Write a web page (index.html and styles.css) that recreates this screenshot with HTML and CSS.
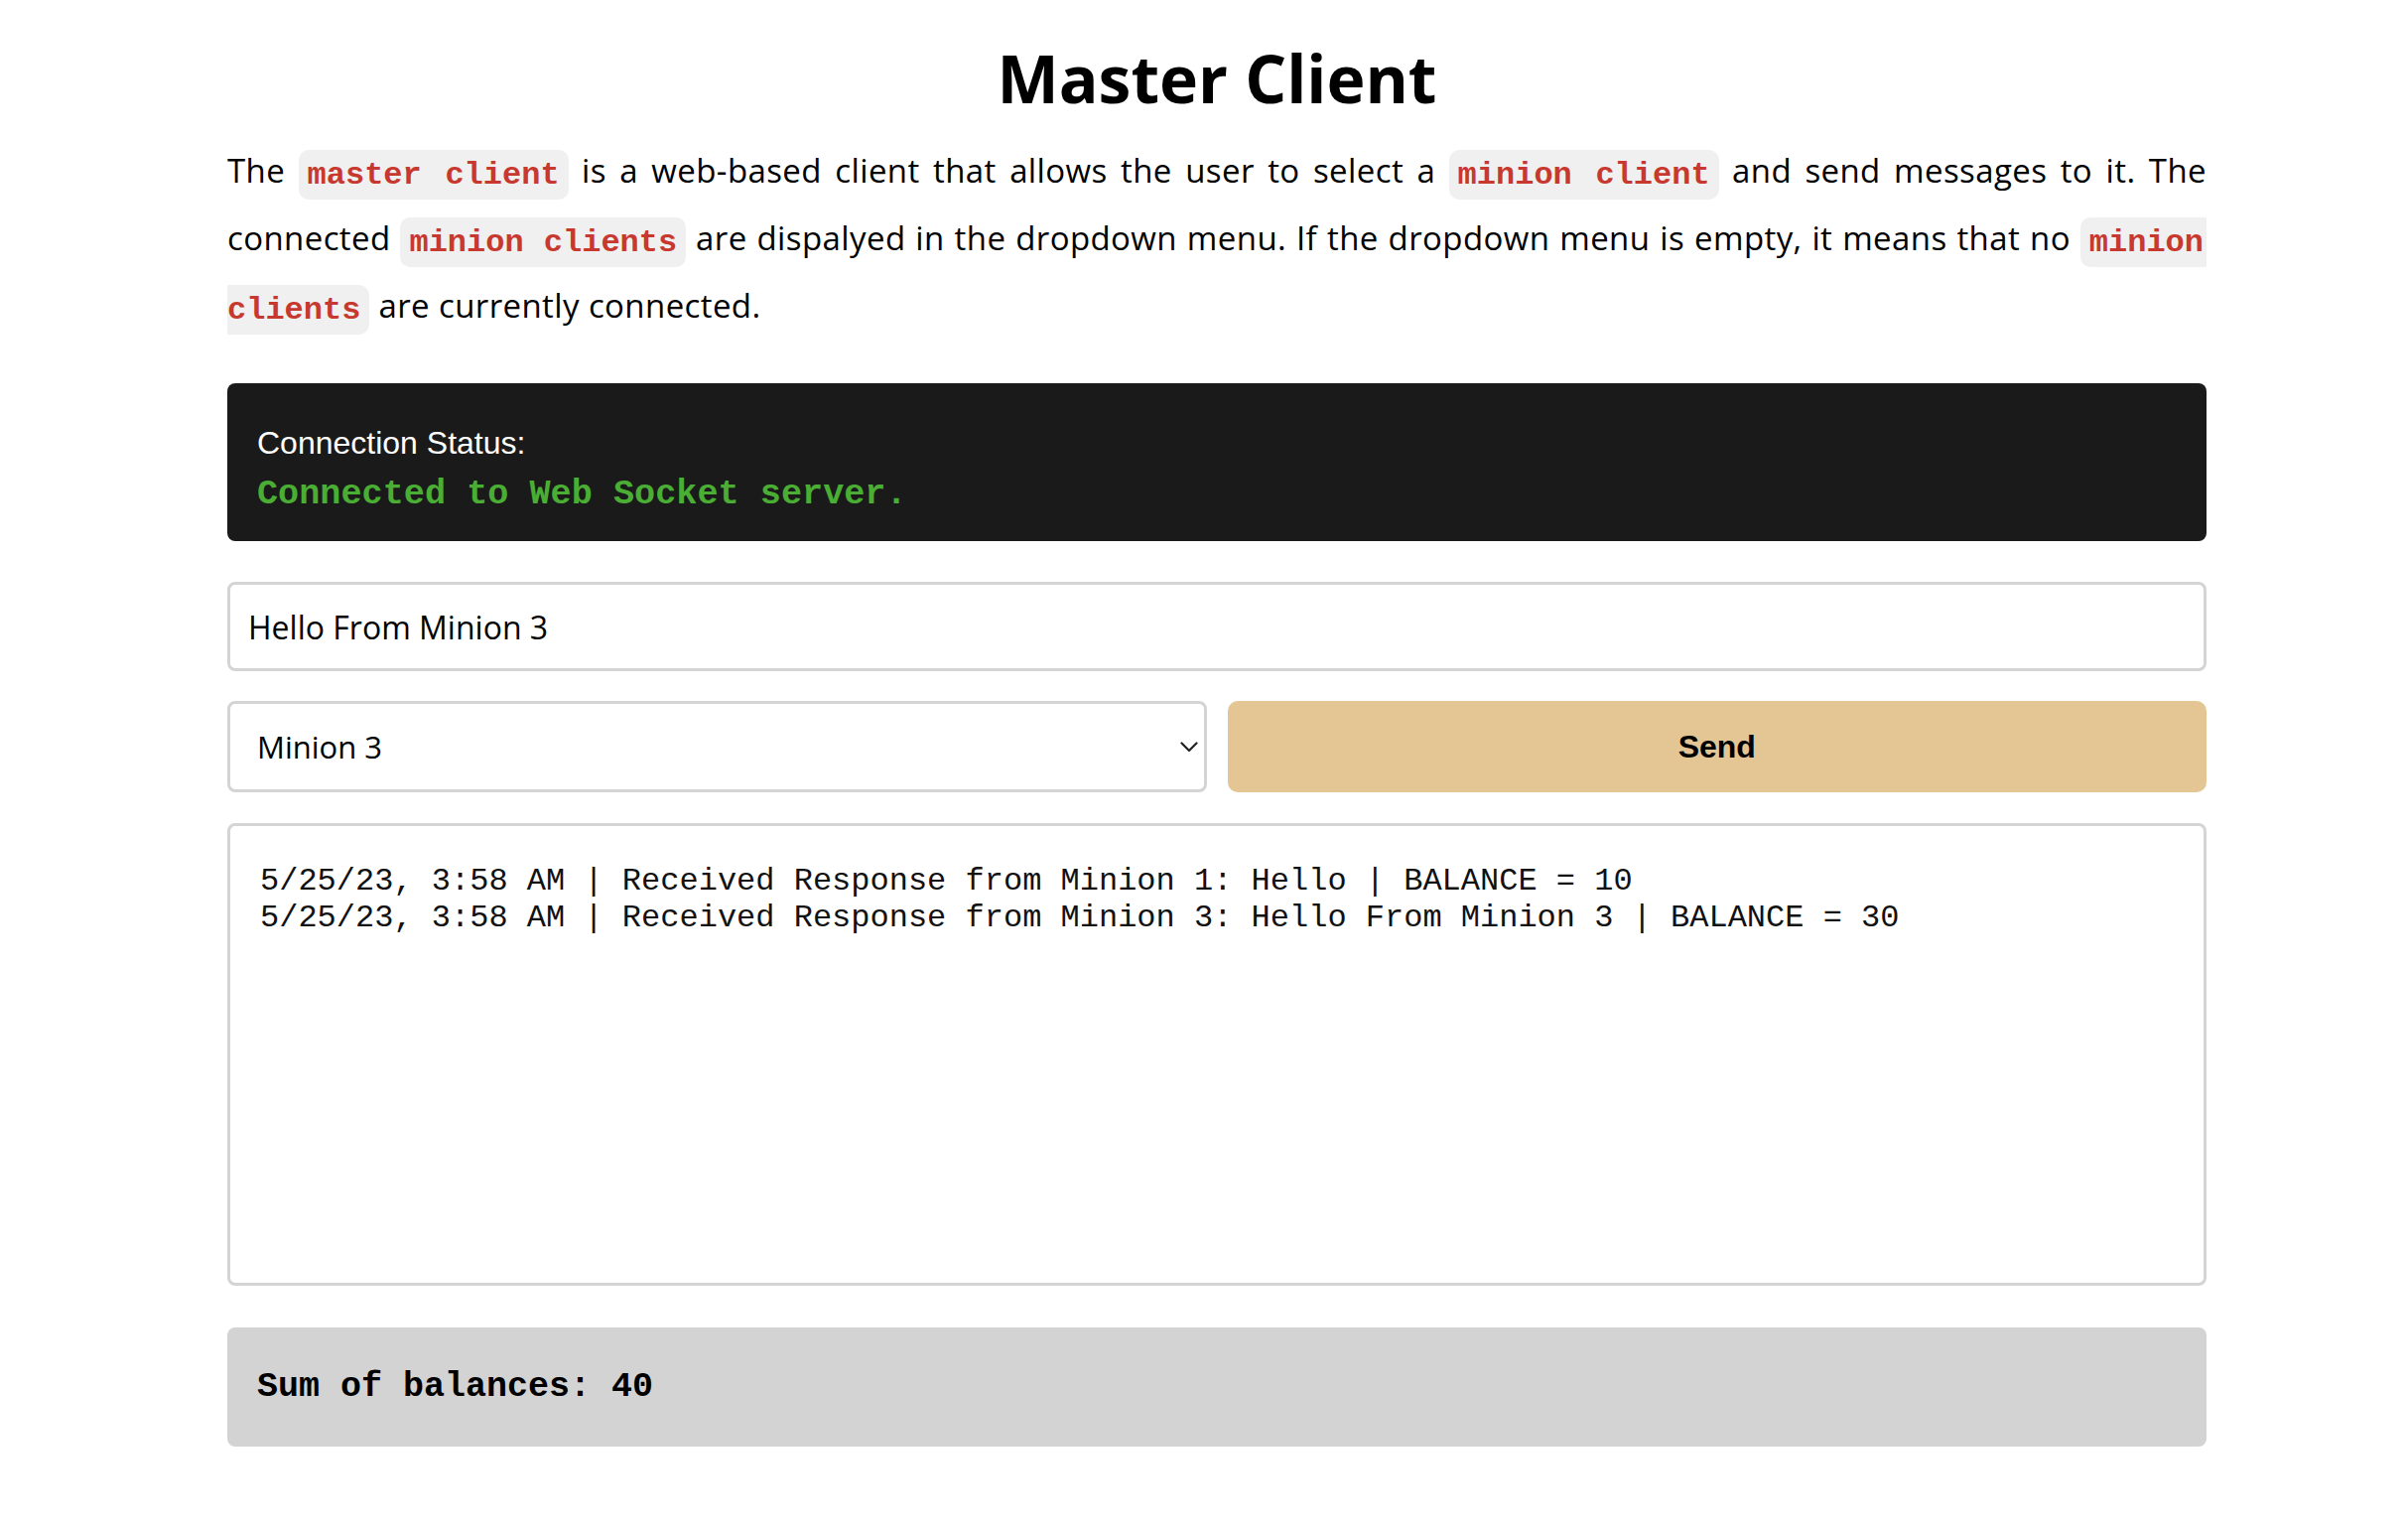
FILE: index.html
```html
<!DOCTYPE html>
<html lang="en">
<head>
<meta charset="utf-8">
<title>Master Client</title>
<link rel="stylesheet" href="styles.css">
</head>
<body>
<div class="page">
  <h1 class="title">Master Client</h1>
  <p class="intro">
    <span class="intro-line">The <code class="tag">master client</code> is a web-based client that allows the user to select a <code class="tag">minion client</code> and send messages to it. The</span>
    <span class="intro-line">connected <code class="tag">minion clients</code> are dispalyed in the dropdown menu. If the dropdown menu is empty, it means that no <code class="tag tag-head">minion</code></span>
    <span class="intro-line intro-last"><code class="tag tag-tail">clients</code> are currently connected.</span>
  </p>

  <div class="status">
    <div class="status-label">Connection Status:</div>
    <div class="status-value">Connected to Web Socket server.</div>
  </div>

  <input class="message" type="text" value="Hello From Minion 3">

  <div class="controls">
    <div class="select-wrap">
      <select class="minion-select">
        <option>Minion 3</option>
      </select>
      <svg class="chevron" width="18" height="11" viewBox="0 0 18 11" aria-hidden="true">
        <path d="M1.5 1.5 L9 9 L16.5 1.5" fill="none" stroke="#222" stroke-width="2.2" stroke-linecap="round" stroke-linejoin="round"/>
      </svg>
    </div>
    <button class="send" type="button">Send</button>
  </div>

  <div class="log"><div class="log-line">5/25/23, 3:58 AM | Received Response from Minion 1: Hello | BALANCE = 10</div><div class="log-line">5/25/23, 3:58 AM | Received Response from Minion 3: Hello From Minion 3 | BALANCE = 30</div></div>

  <div class="sum">Sum of balances: 40</div>
</div>
</body>
</html>
```

FILE: styles.css
```css
html, body {
  margin: 0;
  padding: 0;
  background: #ffffff;
}

body {
  font-family: "Open Sans", "Noto Sans", sans-serif;
  color: #000;
}

.page {
  width: 1994px;
  margin-left: 229px;
  padding-top: 38px;
}

.title {
  margin: 0;
  font-size: 66px;
  line-height: 80px;
  font-weight: 700;
  text-align: center;
}

.intro {
  margin: 20px 0 44px;
  font-size: 33px;
  letter-spacing: 0.4px;
  line-height: 68px;
}

.intro-line {
  display: block;
  text-align: justify;
  text-align-last: justify;
}

.intro-last {
  text-align: left;
  text-align-last: left;
}

.tag {
  font-family: "Liberation Mono", "Courier New", monospace;
  font-weight: 700;
  font-size: 32px;
  letter-spacing: 0;
  line-height: 1;
  color: #c7392f;
  background: #f0f0f0;
  border-radius: 10px;
  padding: 6.5px 9px;
}

.tag-head {
  padding-right: 3px;
  border-radius: 10px 0 0 10px;
}

.tag-tail {
  padding-left: 0;
  border-radius: 0 10px 10px 0;
}

.status {
  background: #1a1a1a;
  border-radius: 8px;
  padding: 40px 30px 27px;
}

.status-label {
  font-family: "Liberation Sans", Arial, sans-serif;
  font-size: 32px;
  line-height: 40px;
  color: #ffffff;
}

.status-value {
  margin-top: 12px;
  font-family: "Liberation Mono", "Courier New", monospace;
  font-weight: 700;
  font-size: 35.2px;
  line-height: 40px;
  color: #4aad34;
}

.message {
  display: block;
  box-sizing: border-box;
  width: 100%;
  height: 90px;
  margin: 41px 0 0;
  padding: 0 18px;
  border: 3px solid #d4d4d4;
  border-radius: 8px;
  font-family: "Open Sans", sans-serif;
  font-size: 32px;
  color: #000;
  background: #fff;
  outline: none;
}

.controls {
  display: grid;
  grid-template-columns: 1fr 1fr;
  gap: 21px;
  margin-top: 30px;
}

.select-wrap {
  position: relative;
}

.minion-select {
  display: block;
  box-sizing: border-box;
  width: 100%;
  height: 92px;
  margin: 0;
  padding: 0 40px 0 27px;
  border: 3px solid #d4d4d4;
  border-radius: 8px;
  background: #fff;
  font-family: "Open Sans", sans-serif;
  font-size: 31px;
  color: #000;
  -webkit-appearance: none;
  appearance: none;
  outline: none;
}

.chevron {
  position: absolute;
  right: 9px;
  top: 50%;
  margin-top: -5px;
  pointer-events: none;
}

.send {
  display: block;
  height: 92px;
  margin: 0;
  border: none;
  border-radius: 10px;
  background: #e4c594;
  font-family: "Liberation Sans", Arial, sans-serif;
  font-weight: 700;
  font-size: 32px;
  color: #000;
  cursor: pointer;
}

.log {
  box-sizing: border-box;
  height: 466px;
  margin-top: 31px;
  padding: 37px 30px;
  border: 3px solid #d4d4d4;
  border-radius: 8px;
  font-family: "Liberation Mono", "Courier New", monospace;
  font-size: 32px;
  line-height: normal;
  color: #111;
  white-space: pre;
  overflow: hidden;
}

.sum {
  margin-top: 42px;
  padding: 40px 30px;
  background: #d3d3d3;
  border-radius: 8px;
  font-family: "Liberation Mono", "Courier New", monospace;
  font-weight: 700;
  font-size: 35px;
  line-height: normal;
  color: #000;
}
```
